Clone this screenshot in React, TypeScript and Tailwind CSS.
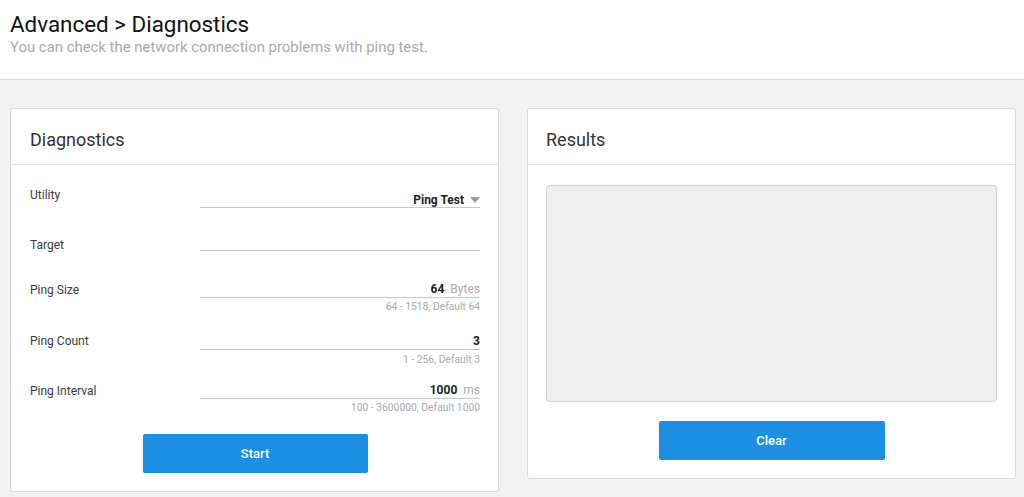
import React from 'react';

const font = { fontFamily: 'Roboto, "Open Sans", "Liberation Sans", sans-serif' };

function Hint({ text }: { text: string }) {
  return <div className="text-right text-[10.3px] leading-[12px] text-[#aaa]">{text}</div>;
}

export default function App() {
  return (
    <div className="min-h-screen bg-[#f3f3f3]" style={font}>
      {/* Page header */}
      <div className="h-[80px] bg-white border-b border-[#dcdcdc] pl-[10px] pt-[9px]">
        <h1 className="text-[22.4px] leading-[30px] text-[#111]">Advanced &gt; Diagnostics</h1>
        <p className="text-[14.9px] leading-[16px] text-[#aaa]">You can check the network connection problems with ping test.</p>
      </div>

      <div className="grid grid-cols-2 gap-[28px] pl-[10px] pr-[8px] pt-[28px] items-start">
        {/* Diagnostics card */}
        <div className="bg-white border border-[#dadada] rounded-[3px]">
          <div className="border-b border-[#e2e2e2] pl-[19px] pt-[19px] pb-[12px]">
            <h2 className="text-[18px] leading-[24px] text-[#333]">Diagnostics</h2>
          </div>
          <div className="pl-[19px] pr-[18px] pt-[23px] pb-[18px] text-[12px] leading-[14px] text-[#3a3a44]">
            {/* Utility */}
            <div className="grid grid-cols-[170px_280px]">
              <div>Utility</div>
              <div className="h-[20px] border-b border-[#c8c8c8] flex items-end justify-end">
                <span className="font-bold text-[#222]">Ping Test</span>
                <svg width="10" height="6" viewBox="0 0 10 6" className="ml-[6px] mb-[4px]">
                  <path d="M0 0 L10 0 L5 6 Z" fill="#9a9a9a" />
                </svg>
              </div>
            </div>

            {/* Target */}
            <div className="grid grid-cols-[170px_280px] mt-[28px]">
              <div className="pt-[2px]">Target</div>
              <div className="h-[15px] border-b border-[#c8c8c8]" />
            </div>

            {/* Ping Size */}
            <div className="grid grid-cols-[170px_280px] mt-[29px]">
              <div className="pt-[2px]">Ping Size</div>
              <div>
                <div className="h-[17px] border-b border-[#c8c8c8] flex items-end justify-end pb-[1px]">
                  <span className="font-bold text-[#222]">64</span>
                  <span className="ml-[6px] text-[#aaa] text-[12px]">Bytes</span>
                </div>
                <div className="mt-[3px]"><Hint text="64 - 1518, Default 64" /></div>
              </div>
            </div>

            {/* Ping Count */}
            <div className="grid grid-cols-[170px_280px] mt-[20px]">
              <div className="pt-[1px]">Ping Count</div>
              <div>
                <div className="h-[17px] border-b border-[#c8c8c8] flex items-end justify-end pb-[1px]">
                  <span className="font-bold text-[#222]">3</span>
                </div>
                <div className="mt-[4px]"><Hint text="1 - 256, Default 3" /></div>
              </div>
            </div>

            {/* Ping Interval */}
            <div className="grid grid-cols-[170px_280px] mt-[16px]">
              <div className="pt-[2px]">Ping Interval</div>
              <div>
                <div className="h-[17px] border-b border-[#c8c8c8] flex items-end justify-end pb-[1px]">
                  <span className="font-bold text-[#222]">1000</span>
                  <span className="ml-[6px] text-[#aaa] text-[12px]">ms</span>
                </div>
                <div className="mt-[3px]"><Hint text="100 - 3600000, Default 1000" /></div>
              </div>
            </div>

            <div className="flex justify-center mt-[20px]">
              <button className="w-[225px] h-[39px] bg-[#1a8fe4] rounded-[2px] text-white text-[13px] font-medium">Start</button>
            </div>
          </div>
        </div>

        {/* Results card */}
        <div className="bg-white border border-[#dadada] rounded-[3px]">
          <div className="border-b border-[#e2e2e2] pl-[18px] pt-[19px] pb-[12px]">
            <h2 className="text-[18px] leading-[24px] text-[#333]">Results</h2>
          </div>
          <div className="px-[18px] pt-[20px] pb-[18px]">
            <div className="h-[217px] bg-[#efefef] border border-[#cfcfcf] rounded-[4px]" />
            <div className="flex justify-center mt-[19px]">
              <button className="w-[226px] h-[39px] bg-[#1a8fe4] rounded-[2px] text-white text-[13px] font-medium">Clear</button>
            </div>
          </div>
        </div>
      </div>
    </div>
  );
}
